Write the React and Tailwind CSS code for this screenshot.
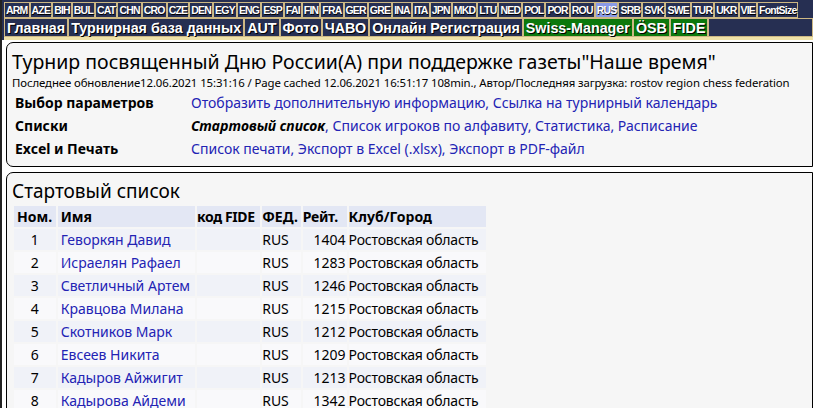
import React from 'react';

const langs = ['ARM', 'AZE', 'BIH', 'BUL', 'CAT', 'CHN', 'CRO', 'CZE', 'DEN', 'EGY', 'ENG', 'ESP', 'FAI', 'FIN', 'FRA', 'GER', 'GRE', 'INA', 'ITA', 'JPN', 'MKD', 'LTU', 'NED', 'POL', 'POR', 'ROU', 'RUS', 'SRB', 'SVK', 'SWE', 'TUR', 'UKR', 'VIE', 'FontSize'];

const menu = [
  { label: 'Главная' },
  { label: 'Турнирная база данных' },
  { label: 'AUT' },
  { label: 'Фото' },
  { label: 'ЧАВО' },
  { label: 'Онлайн Регистрация' },
  { label: 'Swiss-Manager', green: true },
  { label: 'ÖSB', green: true },
  { label: 'FIDE', green: true },
];

const players = [
  [1, 'Геворкян Давид', 1404],
  [2, 'Исраелян Рафаел', 1283],
  [3, 'Светличный Артем', 1246],
  [4, 'Кравцова Милана', 1215],
  [5, 'Скотников Марк', 1212],
  [6, 'Евсеев Никита', 1209],
  [7, 'Кадыров Айжигит', 1213],
  [8, 'Кадырова Айдеми', 1342],
];

const ui = { fontFamily: '"Noto Sans", "Open Sans", sans-serif' };
const head = { fontFamily: '"Liberation Sans", Arial, sans-serif' };

const Header = () => (
  <div className="bg-[#262f52] pl-[2px] pt-[2px]" style={head}>
    <div className="flex overflow-hidden whitespace-nowrap">
      {langs.map((l) => (
        <span
          key={l}
          className={`h-[16px] shrink-0 px-[1px] border border-[#cdb884] text-[10.5px] font-bold leading-[14px] tracking-[-0.8px] text-white [text-shadow:0.5px_0.5px_0_#000] ${l === 'RUS' ? 'bg-[#8a9ae6]' : 'bg-[#262f52]'}`}
        >
          {l}
        </span>
      ))}
    </div>
    <div className="flex whitespace-nowrap">
      {menu.map((m) => (
        <span
          key={m.label}
          className={`h-[19px] px-[2px] border border-[#cdb884] text-[14.3px] font-bold leading-[18px] text-white [text-shadow:1px_1px_0_#000] ${m.green ? 'bg-[#0c780c]' : 'bg-[#262f52]'}`}
        >
          {m.label}
        </span>
      ))}
      <span className="h-[19px] flex-1 border border-[#cdb884] bg-[#262f52]" />
    </div>
    <div className="h-[3px] bg-[#efe2a8]" />
  </div>
);

const InfoRow = ({ label, children }) => (
  <div className="flex h-[23px] items-center text-[14px]">
    <span className="w-[176px] font-bold text-black">{label}</span>
    <span className="text-[#2323b4]">{children}</span>
  </div>
);

const App = () => (
  <div className="w-[813px] h-[408px] overflow-hidden bg-white border-l-2 border-[#222]" style={ui}>
    <Header />
    <div className="pl-[4px] pt-[2px]">
      <div className="h-[125px] rounded-l-[7px] border border-black bg-[#f6f6f6] pl-[5px] pt-[7px]">
        <div className="text-[19.5px] leading-[24px] text-black whitespace-nowrap">
          Турнир посвященный Дню России(А) при поддержке газеты"Наше время"
        </div>
        <div className="mt-[2px] text-[11.4px] leading-[14px] text-black whitespace-nowrap tracking-[-0.1px]">
          Последнее обновление12.06.2021 15:31:16 / Page cached 12.06.2021 16:51:17 108min., Автор/Последняя загрузка: rostov region chess federation
        </div>
        <div className="mt-[1px] pl-[3px]">
          <InfoRow label="Выбор параметров">Отобразить дополнительную информацию, Ссылка на турнирный календарь</InfoRow>
          <InfoRow label="Списки">
            <b className="italic text-black">Стартовый список</b>, Список игроков по алфавиту, Статистика, Расписание
          </InfoRow>
          <InfoRow label="Excel и Печать">Список печати, Экспорт в Excel (.xlsx), Экспорт в PDF-файл</InfoRow>
        </div>
      </div>
      <div className="mt-[5px] h-[300px] rounded-tl-[7px] border border-black bg-[#f6f6f6] pl-[5px] pt-[6px]">
        <div className="text-[19px] leading-[24px] text-black">Стартовый список</div>
        <table className="table-fixed w-[476px] border-separate border-spacing-[2px] text-[14px] leading-[21px] mt-[1px] whitespace-nowrap">
          <colgroup>
            <col className="w-[41px]" />
            <col className="w-[135px]" />
            <col className="w-[62px]" />
            <col className="w-[38px]" />
            <col className="w-[43px]" />
            <col className="w-[135px]" />
          </colgroup>
          <thead>
            <tr className="font-bold text-black">
              <th className="h-[21px] bg-[#e3e7f4] px-[3px] text-left">Ном.</th>
              <th className="bg-[#e3e7f4] px-[3px] text-left">Имя</th>
              <th className="bg-[#e3e7f4] px-0 text-left tracking-[-0.4px]">код FIDE</th>
              <th className="bg-[#e3e7f4] px-0 text-left">ФЕД.</th>
              <th className="bg-[#e3e7f4] px-0 text-left tracking-[-0.3px]">Рейт.</th>
              <th className="bg-[#e3e7f4] px-0 text-left">Клуб/Город</th>
            </tr>
          </thead>
          <tbody>
            {players.map(([n, name, r], i) => {
              const bg = i % 2 === 0 ? 'bg-[#f0f2f8]' : 'bg-[#f9f9fb]';
              return (
                <tr key={n} className="text-black">
                  <td className={`h-[21px] ${bg} text-center`}>{n}</td>
                  <td className={`${bg} px-[3px] text-[#2323b4]`}>{name}</td>
                  <td className={bg}></td>
                  <td className={`${bg} px-0`}>RUS</td>
                  <td className={`${bg} px-[1px] text-right`}>{r}</td>
                  <td className={`${bg} px-0 tracking-[-0.2px]`}>Ростовская область</td>
                </tr>
              );
            })}
          </tbody>
        </table>
      </div>
    </div>
  </div>
);

export default App;
